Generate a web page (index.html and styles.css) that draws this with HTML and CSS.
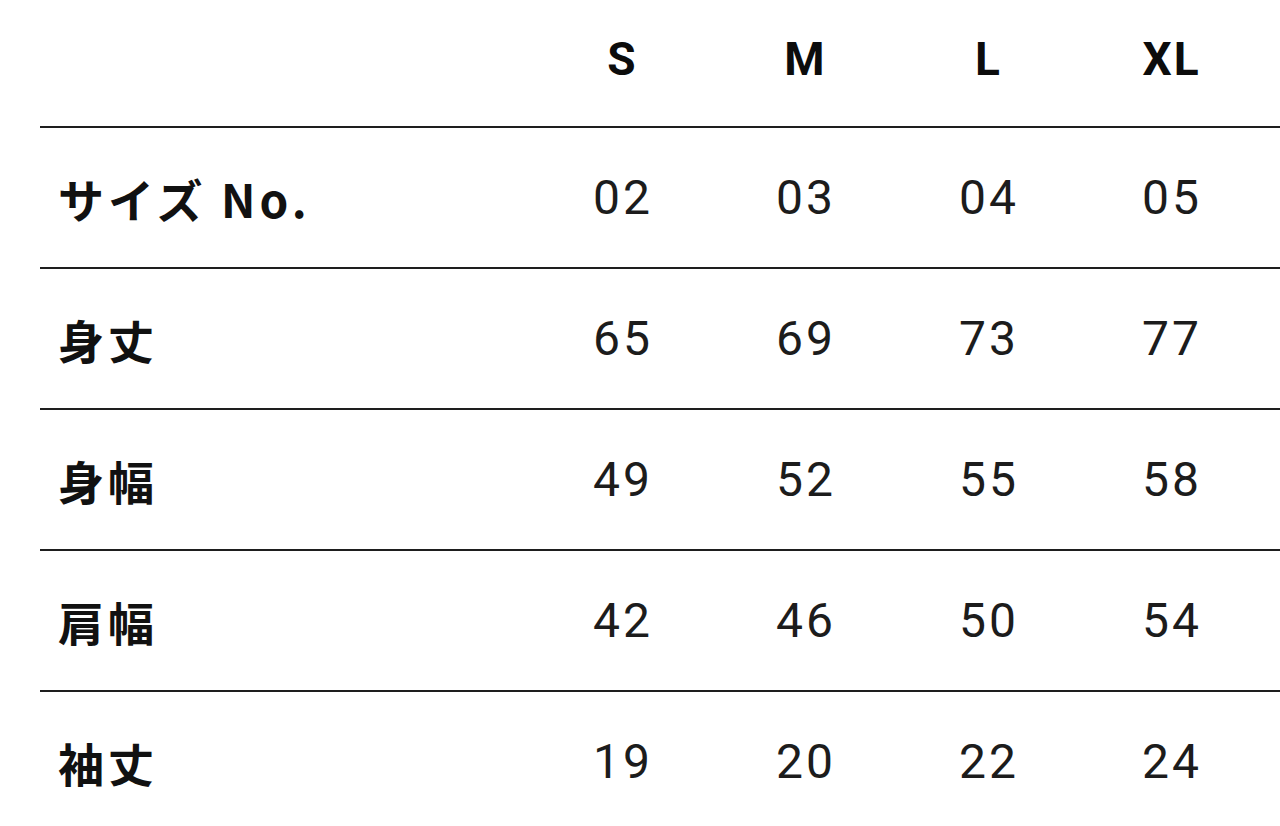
FILE: index.html
```html
<!DOCTYPE html>
<html lang="ja">
<head>
<meta charset="utf-8">
<link rel="stylesheet" href="styles.css">
</head>
<body>
<div class="table">
  <div class="row head">
    <div class="cell label"></div>
    <div class="cell">S</div>
    <div class="cell">M</div>
    <div class="cell">L</div>
    <div class="cell">XL</div>
  </div>
  <div class="row">
    <div class="cell label">サイズ No.</div>
    <div class="cell">02</div>
    <div class="cell">03</div>
    <div class="cell">04</div>
    <div class="cell">05</div>
  </div>
  <div class="row">
    <div class="cell label">身丈</div>
    <div class="cell">65</div>
    <div class="cell">69</div>
    <div class="cell">73</div>
    <div class="cell">77</div>
  </div>
  <div class="row">
    <div class="cell label">身幅</div>
    <div class="cell">49</div>
    <div class="cell">52</div>
    <div class="cell">55</div>
    <div class="cell">58</div>
  </div>
  <div class="row">
    <div class="cell label">肩幅</div>
    <div class="cell">42</div>
    <div class="cell">46</div>
    <div class="cell">50</div>
    <div class="cell">54</div>
  </div>
  <div class="row">
    <div class="cell label">袖丈</div>
    <div class="cell">19</div>
    <div class="cell">20</div>
    <div class="cell">22</div>
    <div class="cell">24</div>
  </div>
</div>
</body>
</html>
```

FILE: styles.css
```css
html, body {
  margin: 0;
  padding: 0;
  background: #ffffff;
  overflow: hidden;
}
body {
  font-family: Roboto, "Noto Sans CJK JP", sans-serif;
  color: #111111;
}
.table {
  padding-left: 40px;
}
.row {
  display: grid;
  grid-template-columns: 490px repeat(4, 183px) 1fr;
  height: 139px;
  border-top: 2px solid #1e1e1e;
  align-items: center;
}
.row.head {
  height: 126px;
  border-top: none;
  align-items: start;
}
.row.head .cell {
  font-weight: 700;
  font-size: 46px;
  letter-spacing: 2px;
  padding-left: 2px;
  padding-top: 32px;
  line-height: 54px;
  color: #0c0c0c;
}
.cell {
  text-align: center;
  font-size: 48px;
  line-height: 54px;
  font-weight: 400;
  letter-spacing: 3px;
  padding-left: 3px;
  color: #1c1c1c;
}
.cell.label {
  text-align: left;
  padding-left: 18px;
  font-family: "Noto Sans CJK JP", Roboto, sans-serif;
  font-weight: 700;
  font-size: 46px;
  letter-spacing: 4px;
  color: #111111;
}
```
